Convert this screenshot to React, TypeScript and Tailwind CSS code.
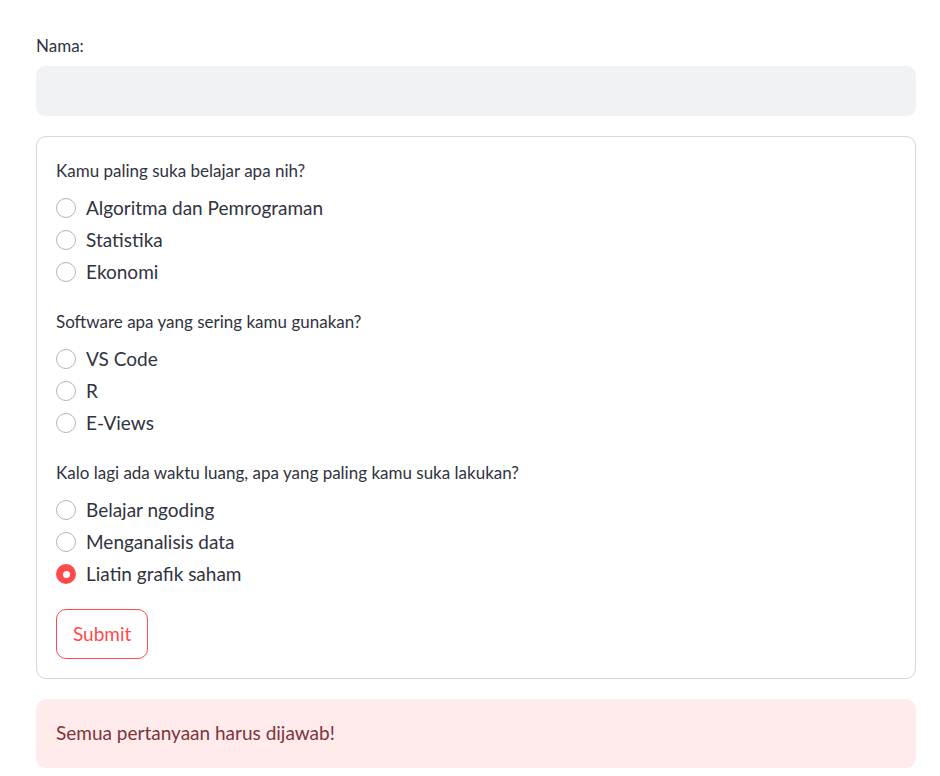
import { useState } from 'react';

const questions = [
  {
    label: 'Kamu paling suka belajar apa nih?',
    options: ['Algoritma dan Pemrograman', 'Statistika', 'Ekonomi'],
  },
  {
    label: 'Software apa yang sering kamu gunakan?',
    options: ['VS Code', 'R', 'E-Views'],
  },
  {
    label: 'Kalo lagi ada waktu luang, apa yang paling kamu suka lakukan?',
    options: ['Belajar ngoding', 'Menganalisis data', 'Liatin grafik saham'],
  },
];

function Radio({ checked }: { checked: boolean }) {
  if (checked) {
    return (
      <span className="flex size-5 items-center justify-center rounded-full bg-[#ff4b4b]">
        <span className="size-[7px] rounded-full bg-white" />
      </span>
    );
  }
  return <span className="size-5 rounded-full border border-[#b4b5b9] bg-white" />;
}

function App() {
  const [answers, setAnswers] = useState<(number | null)[]>([null, null, 2]);

  return (
    <div className="bg-white pl-9 pr-6 pt-[35px] font-['Lato',sans-serif] text-[#31333f]">
      <label className="block text-[17px] leading-[22px]">Nama:</label>
      <input
        type="text"
        className="mt-[9px] block h-[50px] w-full rounded-[9px] bg-[#f0f2f6] px-3 text-[19px] outline-none"
      />

      <form
        className="mt-5 rounded-[10px] border border-[#d6d6d9] px-[19px] pt-[23px] pb-[19px]"
        onSubmit={(e) => e.preventDefault()}
      >
        <div className="flex flex-col gap-[23px]">
          {questions.map((q, qi) => (
            <div key={q.label}>
              <p className="text-[17px] leading-[22px]">{q.label}</p>
              <div className="mt-[10px] flex flex-col">
                {q.options.map((opt, oi) => (
                  <button
                    type="button"
                    key={opt}
                    onClick={() => setAnswers(answers.map((a, i) => (i === qi ? oi : a)))}
                    className="flex h-8 items-center gap-[10px] text-left"
                  >
                    <Radio checked={answers[qi] === oi} />
                    <span className="text-[19px]">{opt}</span>
                  </button>
                ))}
              </div>
            </div>
          ))}
        </div>
        <button
          type="submit"
          className="mt-[19px] h-[50px] rounded-[10px] border border-[#ff4b4b] px-4 text-[19px] text-[#ff4b4b]"
        >
          Submit
        </button>
      </form>

      <div className="mt-5 flex h-[69px] items-center rounded-[10px] bg-[#ffebeb] px-5 text-[19px] text-[#7d353b]">
        Semua pertanyaan harus dijawab!
      </div>
    </div>
  );
}

export default App;
